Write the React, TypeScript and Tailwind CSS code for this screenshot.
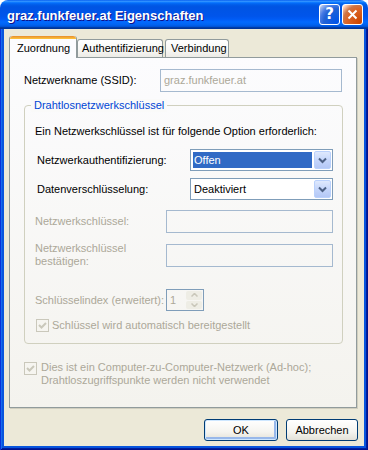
import React from 'react'

const font = "font-['Liberation_Sans','Arial',sans-serif]"

function Chevron({ color = '#4d6185' }: { color?: string }) {
  return (
    <svg width="9" height="7" viewBox="0 0 9 7">
      <path d="M1 1.5 L4.5 5 L8 1.5" fill="none" stroke={color} strokeWidth="2" />
    </svg>
  )
}

function Combo({ value, selected }: { value: string; selected?: boolean }) {
  return (
    <div className="flex h-[22px] w-[143px] items-center border border-[#7f9db9] bg-white pl-[2px] pr-[1px]">
      <div
        className={
          selected
            ? 'flex h-[16px] flex-1 items-center bg-[#316ac5] pl-[1px] text-white'
            : 'flex h-[16px] flex-1 items-center pl-[1px] text-black'
        }
      >
        {value}
      </div>
      <div className="ml-[2px] flex h-[18px] w-[17px] items-center justify-center rounded-[2px] border border-[#bad1fc] bg-[linear-gradient(180deg,#dfe9fd_0%,#c5d6fb_50%,#b4c8f6_100%)]">
        <Chevron />
      </div>
    </div>
  )
}

function CheckBox() {
  return (
    <div className="flex h-[13px] w-[13px] shrink-0 items-center justify-center border border-[#cac8bb] bg-[#f6f5f0]">
      <svg width="9" height="9" viewBox="0 0 9 9">
        <path d="M1 4 L3.5 6.5 L8 2" fill="none" stroke="#cac8bb" strokeWidth="2" />
      </svg>
    </div>
  )
}

function Button({ label, primary }: { label: string; primary?: boolean }) {
  return (
    <div
      className={
        'flex h-[22px] items-center justify-center rounded-[3px] border border-[#003c74] bg-[linear-gradient(180deg,#ffffff_0%,#f5f4ef_60%,#e3e1d8_100%)] text-black ' +
        (primary ? 'w-[74px] shadow-[inset_0_0_0_1px_#cee7ff,inset_-1px_-1px_0_2px_#98b8ea]' : 'w-[72px]')
      }
    >
      {label}
    </div>
  )
}

export default function App() {
  return (
    <div className={`flex h-[450px] w-[368px] flex-col overflow-hidden whitespace-nowrap rounded-t-[8px] text-[11px] leading-[13px] ${font}`}>
      {/* title bar */}
      <div className="flex h-[29px] shrink-0 items-center bg-[linear-gradient(180deg,#0058ee_0%,#3593ff_4%,#288eff_6%,#127dff_8%,#036ffc_10%,#0262ee_14%,#0057e5_20%,#0054e3_24%,#0055eb_56%,#005bf5_66%,#026afe_76%,#0062ef_86%,#0052d6_92%,#0040ab_94%,#003092_100%)] pl-[7px] pr-[5px]">
        <div className="flex-1 pt-[1px] text-[13px] font-bold text-white [text-shadow:1px_1px_#0f1089]">
          graz.funkfeuer.at Eigenschaften
        </div>
        <div className="flex h-[21px] w-[21px] items-center justify-center rounded-[3px] border border-white bg-[radial-gradient(circle_at_90%_90%,#0054e9_0%,#2263d5_55%,#4479e4_70%,#a3bbec_90%,#fff_100%)] font-['DejaVu_Sans',sans-serif] text-[15px] font-bold text-white">
          ?
        </div>
        <div className="ml-[2px] flex h-[21px] w-[21px] items-center justify-center rounded-[3px] border border-white bg-[radial-gradient(circle_at_90%_90%,#cc4600_0%,#dc6527_55%,#cd7546_70%,#ffccb2_90%,#fff_100%)]">
          <svg width="11" height="11" viewBox="0 0 11 11">
            <path d="M1.5 1.5 L9.5 9.5 M9.5 1.5 L1.5 9.5" stroke="white" strokeWidth="2" />
          </svg>
        </div>
      </div>

      {/* window body with blue frame */}
      <div className="flex flex-1 flex-col bg-[#0855dd] px-[4px] pb-[4px] shadow-[inset_1px_0_#0831d9,inset_-1px_0_#00138c,inset_0_-1px_#00138c,inset_2px_0_#166aee,inset_-2px_0_#001ea0,inset_0_-2px_#001ea0]">
        <div className="flex flex-1 flex-col bg-[#ece9d8] px-[5px] pt-[7px]">
          {/* tabs */}
          <div className="relative z-10 flex h-[22px] items-end">
            <div className="flex h-[22px] w-[68px] flex-col rounded-t-[3px] border-x border-[#919b9c] bg-[#fcfcfe]">
              <div className="h-[3px] rounded-t-[3px] bg-[linear-gradient(180deg,#e68b2c_0%,#ffc73c_100%)]" />
              <div className="pl-[7px] pt-[3px] text-black">Zuordnung</div>
            </div>
            <div className="mb-[1px] flex h-[18px] w-[86px] items-center rounded-t-[3px] border border-b-0 border-[#919b9c] bg-[linear-gradient(180deg,#ffffff_0%,#f7f7f4_60%,#ecebe6_100%)] pl-[4px] text-black">
              Authentifizierung
            </div>
            <div className="mb-[1px] ml-[2px] flex h-[18px] w-[64px] items-center rounded-t-[3px] border border-b-0 border-[#919b9c] bg-[linear-gradient(180deg,#ffffff_0%,#f7f7f4_60%,#ecebe6_100%)] pl-[5px] text-black">
              Verbindung
            </div>
          </div>

          {/* panel */}
          <div className="-mt-[1px] flex h-[351px] w-[348px] flex-col border border-[#919b9c] bg-[linear-gradient(180deg,#fcfcfe_0%,#f4f3ee_100%)] pl-[14px] pt-[11px] shadow-[1px_1px_0_#d0cebf]">
            <div className="flex h-[23px] items-center">
              <div className="w-[136px] text-black">Netzwerkname (SSID):</div>
              <div className="flex h-[23px] w-[182px] items-center border border-[#a5b9cf] pl-[3px] text-[#aca899]">
                graz.funkfeuer.at
              </div>
            </div>

            {/* group box */}
            <div className="relative mt-[13px] h-[239px] w-[319px] rounded-[4px] border border-[#d0d0bf] pl-[10px] pt-[19px]">
              <div className="absolute -top-[7px] left-[6px] bg-[#fafaf9] px-[3px] text-[#0046d5]">
                Drahtlosnetzwerkschlüssel
              </div>
              <div className="text-black">Ein Netzwerkschlüssel ist für folgende Option erforderlich:</div>

              <div className="mt-[11px] flex items-center">
                <div className="w-[155px] pl-[2px] text-black">Netzwerkauthentifizierung:</div>
                <Combo value="Offen" selected />
              </div>
              <div className="mt-[7px] flex items-center">
                <div className="w-[155px] pl-[2px] text-black">Datenverschlüsselung:</div>
                <Combo value="Deaktiviert" />
              </div>

              <div className="mt-[10px] flex items-center">
                <div className="w-[131px] text-[#aca899]">Netzwerkschlüssel:</div>
                <div className="h-[23px] w-[167px] border border-[#a5b9cf]" />
              </div>
              <div className="mt-[9px] flex items-center">
                <div className="w-[131px] text-[#aca899]">
                  Netzwerkschlüssel
                  <br />
                  bestätigen:
                </div>
                <div className="h-[23px] w-[167px] border border-[#a5b9cf]" />
              </div>

              <div className="mt-[21px] flex items-center">
                <div className="w-[131px] text-[#aca899]">Schlüsselindex (erweitert):</div>
                <div className="flex h-[22px] w-[38px] items-center border border-[#7f9db9] pl-[3px] pr-[1px]">
                  <span className="flex-1 text-[#aca899]">1</span>
                  <div className="flex h-[18px] w-[16px] flex-col gap-[1px]">
                    <div className="flex flex-1 items-center justify-center rounded-[2px] bg-[#eeede5]">
                      <svg width="7" height="4" viewBox="0 0 7 4">
                        <path d="M0.5 3.5 L3.5 0.5 L6.5 3.5" fill="none" stroke="#c9c7ba" strokeWidth="1.5" />
                      </svg>
                    </div>
                    <div className="flex flex-1 items-center justify-center rounded-[2px] bg-[#eeede5]">
                      <svg width="7" height="4" viewBox="0 0 7 4">
                        <path d="M0.5 0.5 L3.5 3.5 L6.5 0.5" fill="none" stroke="#c9c7ba" strokeWidth="1.5" />
                      </svg>
                    </div>
                  </div>
                </div>
              </div>

              <div className="mt-[8px] flex items-center gap-[3px] pl-[1px]">
                <CheckBox />
                <span className="text-[#aca899]">Schlüssel wird automatisch bereitgestellt</span>
              </div>
            </div>

            <div className="mt-[17px] flex items-start gap-[4px]">
              <div className="pt-[1px]">
                <CheckBox />
              </div>
              <div className="text-[#aca899]">
                Dies ist ein Computer-zu-Computer-Netzwerk (Ad-hoc);
                <br />
                Drahtloszugriffspunkte werden nicht verwendet
              </div>
            </div>
          </div>

          {/* buttons */}
          <div className="mt-[11px] flex w-[349px] justify-end gap-[8px]">
            <Button label="OK" primary />
            <Button label="Abbrechen" />
          </div>
        </div>
      </div>
    </div>
  )
}
